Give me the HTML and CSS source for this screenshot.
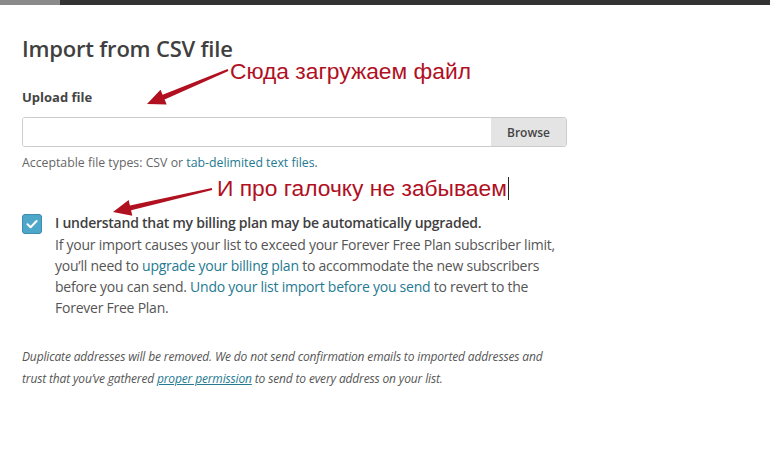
FILE: index.html
```html
<!DOCTYPE html>
<html>
<head>
<meta charset="utf-8">
<link rel="stylesheet" href="styles.css">
</head>
<body>
<div class="topbar"><div class="topbar-tab"></div></div>
<main class="page">
  <h1 class="title">Import from CSV file</h1>
  <label class="label">Upload file</label>
  <div class="file-field">
    <div class="file-input"></div>
    <div class="browse">Browse</div>
  </div>
  <p class="hint">Acceptable file types: CSV or <a class="link">tab-delimited text files</a>.</p>
  <div class="check-row">
    <div class="checkbox">
      <svg width="20" height="20" viewBox="0 0 20 20"><path d="M5.5 10.2 L8.6 13.2 L14.6 7" fill="none" stroke="#fff" stroke-width="2" stroke-linecap="round" stroke-linejoin="round"/></svg>
    </div>
    <div class="check-text">
      <div class="check-title">I understand that my billing plan may be automatically upgraded.</div>
      <p class="check-desc">If your import causes your list to exceed your Forever Free Plan subscriber limit, you’ll need to <a class="link">upgrade your billing plan</a> to accommodate the new subscribers before you can send. <a class="link">Undo your list import before you send</a> to revert to the Forever Free Plan.</p>
    </div>
  </div>
  <p class="note">Duplicate addresses will be removed. We do not send confirmation emails to imported addresses and trust that you’ve gathered <a class="link underline">proper permission</a> to send to every address on your list.</p>
</main>
<div class="annot annot-1">Сюда загружаем файл</div>
<div class="annot annot-2">И про галочку не забываем<span class="caret"></span></div>
<svg class="arrows" width="770" height="462" viewBox="0 0 770 462">
  <polygon fill="#b0101f" points="228.4,70.9 164.6,99.4 166.7,104.5 147,104 160.5,89.7 162.6,94.8 227.6,69.1"/>
  <polygon fill="#b0101f" points="212.2,190 131.1,210.3 132.3,215.7 113,212 128.7,200.1 129.9,205.5 211.8,188"/>
</svg>
</body>
</html>
```
FILE: styles.css
```css
html, body { margin: 0; padding: 0; background: #fff; }
body { font-family: "Open Sans", "DejaVu Sans", sans-serif; color: #555; width: 770px; height: 462px; overflow: hidden; position: relative; }
.topbar { height: 5px; background: #333; }
.topbar-tab { width: 60px; height: 5px; background: #8a8a8a; }
.page { padding: 0 0 0 22px; width: 545px; }
.title { margin: 28px 0 0; font-size: 22px; font-weight: 600; color: #404040; line-height: 30px; letter-spacing: -0.2px; }
.label { display: block; margin-top: 25px; font-size: 13px; font-weight: 700; color: #444; line-height: 18px; }
.file-field { display: flex; margin-top: 11px; height: 30px; border: 1px solid #ccc; border-radius: 3px; box-sizing: border-box; overflow: hidden; }
.file-input { flex: 1; background: #fff; }
.browse { width: 75px; background: #e4e4e4; font-size: 12px; color: #444; display: flex; align-items: center; justify-content: center; font-weight: 600; }
.hint { margin: 7px 0 0; font-size: 12.3px; line-height: 17px; color: #666; letter-spacing: 0; }
.link { color: #257a91; text-decoration: none; }
.underline { text-decoration: underline; }
.check-row { display: flex; margin-top: 42px; gap: 13px; }
.checkbox { width: 20px; height: 20px; flex: none; background: #4ea7c9; border: 1px solid #3b8eb0; border-radius: 3px; box-sizing: border-box; margin-top: 1px; display: flex; align-items: center; justify-content: center; }
.checkbox svg { display: block; margin: -1px; }
.check-title { font-size: 14px; font-weight: 600; color: #3f3f3f; line-height: 20px; letter-spacing: -0.25px; }
.check-desc { margin: 1px 0 0; font-size: 14px; line-height: 21px; color: #555; letter-spacing: -0.24px; }
.note { margin: 28px 0 0; font-size: 12px; font-style: italic; line-height: 22px; color: #555; letter-spacing: -0.15px; }
.annot { position: absolute; font-family: "Liberation Sans", Arial, sans-serif; font-size: 22.8px; color: #b0101f; line-height: 26px; white-space: nowrap; }
.annot-1 { left: 230px; top: 58px; }
.annot-2 { left: 217px; top: 175px; }
.caret { display: inline-block; width: 1px; height: 23px; background: #222; vertical-align: -4px; margin-left: 1px; }
.arrows { position: absolute; left: 0; top: 0; pointer-events: none; }
```
